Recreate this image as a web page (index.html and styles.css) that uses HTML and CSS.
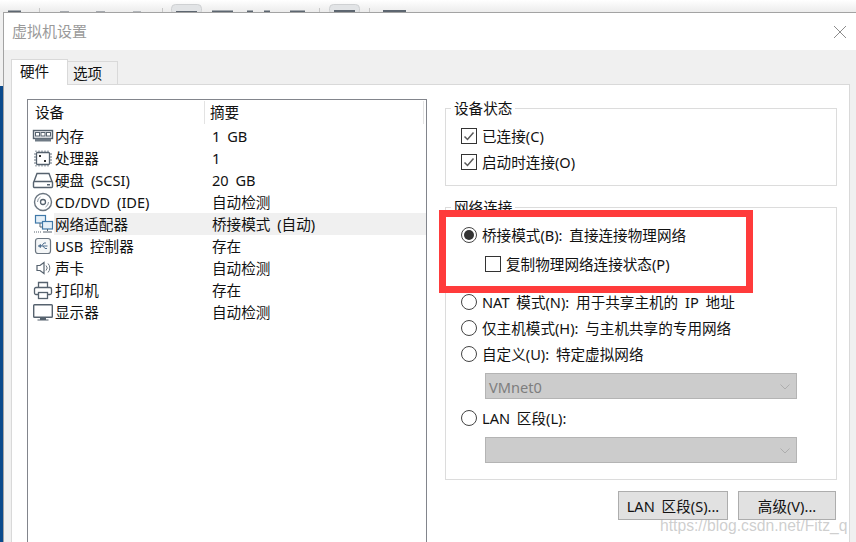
FILE: index.html
```html
<!DOCTYPE html>
<html lang="zh-CN">

<head>
  <meta charset="UTF-8">
  <title>虚拟机设置</title>
  <link rel="stylesheet" href="styles.css">
</head>

<body>
  <div class="page">
    <svg class="toolbar" width="856" height="12" viewBox="0 0 856 12">
      <g fill="#5d6670">
        <rect x="8" y="10.500" width="13" height="1.500" />
        <rect x="60" y="11" width="9" height="1" opacity=".5" />
        <rect x="96" y="11" width="9" height="1" opacity=".5" />
        <rect x="133" y="11" width="8" height="1" opacity=".4" />
      </g>
      <g fill="#c8c8c8">
        <rect x="39" y="8" width="1" height="4" />
        <rect x="162" y="8" width="1" height="4" />
        <rect x="319" y="8" width="1" height="4" />
        <rect x="369" y="8" width="1" height="4" />
      </g>
      <rect x="171.500" y="4.500" width="30" height="10" rx="4" fill="#e2e4e6" stroke="#cfd1d3" />
      <rect x="329.500" y="4.500" width="30" height="10" rx="4" fill="#e2e4e6" stroke="#cfd1d3" />
      <g fill="#5d6670">
        <rect x="176" y="11" width="21" height="1" />
        <rect x="212" y="10.500" width="21" height="1.500" />
        <rect x="247" y="10.500" width="6" height="1.500" />
        <rect x="264" y="10.500" width="6" height="1.500" />
        <rect x="290" y="10.500" width="15" height="1.500" />
        <rect x="334" y="10" width="21" height="2" />
        <rect x="383" y="10" width="23" height="2" />
      </g>
    </svg>

    <div class="window">
      <div class="titlebar">
        <span class="title">虚拟机设置</span>
        <svg class="close" width="12" height="12" viewBox="0 0 12 12">
          <path d="M0 0 12 12M12 0 0 12" stroke="#8c8c8c" fill="none" />
        </svg>
      </div>

      <div class="content">
        <div class="tabs">
          <div class="tab active">硬件</div>
          <div class="tab">选项</div>
        </div>

        <div class="pane">
          <div class="list">
            <div class="list-head">
              <div class="head-cell head-name">设备</div>
              <div class="head-cell head-summary">摘要</div>
            </div>

            <div class="row">
              <svg class="icon" width="22" height="22" viewBox="0 0 22 22">
                <rect x="1.500" y="5.500" width="19" height="8" fill="#eef1f3" stroke="#56626e" stroke-width="1.400" />
                <path d="M3 13.500h16v3h-16z" fill="#6f7a85" />
                <rect x="3.500" y="7.500" width="4" height="3.500" fill="#fff" stroke="#56626e" />
                <rect x="9" y="7.500" width="4" height="3.500" fill="#fff" stroke="#56626e" />
                <rect x="14.500" y="7.500" width="4" height="3.500" fill="#fff" stroke="#56626e" />
              </svg>
              <div class="cell name">内存</div>
              <div class="cell summary">1 GB</div>
            </div>

            <div class="row">
              <svg class="icon" width="22" height="22" viewBox="0 0 22 22">
                <rect x="4.500" y="5.500" width="13" height="12" rx="1" fill="#fff" stroke="#56626e" stroke-width="1.300" />
                <path d="M4 3.500v1.500M7 3.500v1.500M10 3.500v1.500M13 3.500v1.500M16 3.500v1.500M4 18v1.500M7 18v1.500M10 18v1.500M13 18v1.500M16 18v1.500M2 7h2M2 10h2M2 13h2M2 16h2M18 7h2M18 10h2M18 13h2M18 16h2" stroke="#6b7681" fill="none" />
                <rect x="7" y="8" width="2" height="2" fill="#333" />
                <rect x="12" y="13" width="2" height="2" fill="#333" />
              </svg>
              <div class="cell name">处理器</div>
              <div class="cell summary">1</div>
            </div>

            <div class="row">
              <svg class="icon" width="22" height="22" viewBox="0 0 22 22">
                <path d="M2 12.500 5 4.500h12l3 8" fill="none" stroke="#56626e" stroke-width="1.400" />
                <rect x="1.500" y="12.500" width="19" height="6" rx="1" fill="#fff" stroke="#56626e" stroke-width="1.400" />
                <rect x="15" y="15" width="3" height="1.500" fill="#56626e" />
              </svg>
              <div class="cell name">硬盘 (SCSI)</div>
              <div class="cell summary">20 GB</div>
            </div>

            <div class="row">
              <svg class="icon" width="22" height="22" viewBox="0 0 22 22">
                <circle cx="11" cy="11" r="8.500" fill="#fff" stroke="#6b7681" stroke-width="1.400" />
                <circle cx="11" cy="11" r="2.500" fill="none" stroke="#56626e" stroke-width="1.300" />
                <path d="M5.500 11a5.500 5.500 0 0 1 3-5M16.500 11a5.500 5.500 0 0 1-3 5" fill="none" stroke="#8d97a1" />
              </svg>
              <div class="cell name">CD/DVD (IDE)</div>
              <div class="cell summary">自动检测</div>
            </div>

            <div class="row selected">
              <svg class="icon" width="22" height="22" viewBox="0 0 22 22">
                <rect x="3.500" y="2.500" width="10" height="7.500" fill="#e6f0f8" stroke="#3f78a8" stroke-width="1.200" />
                <rect x="10.500" y="8.500" width="10" height="7.500" fill="#e6f0f8" stroke="#3f78a8" stroke-width="1.200" />
                <path d="M8 10v4h2.500M15.500 16v2" fill="none" stroke="#56626e" />
                <path d="M2 19h1M4 19h1M6 19h1M8 19h1M11 19h9" stroke="#56626e" fill="none" />
              </svg>
              <div class="cell name">网络适配器</div>
              <div class="cell summary">桥接模式 (自动)</div>
            </div>

            <div class="row">
              <svg class="icon" width="22" height="22" viewBox="0 0 22 22">
                <rect x="3.500" y="3.500" width="15" height="15" rx="2.500" fill="#f4f6f7" stroke="#6b7681" stroke-width="1.200" />
                <path d="M6.500 11h9M6.500 11l2-1.500v3zM9.500 11l2.500-3h2M11 11l2 2.500h2" fill="none" stroke="#4f6f8f" />
              </svg>
              <div class="cell name">USB 控制器</div>
              <div class="cell summary">存在</div>
            </div>

            <div class="row">
              <svg class="icon" width="22" height="22" viewBox="0 0 22 22">
                <path d="M5 8.500h3l4-3v11l-4-3h-3z" fill="#fff" stroke="#56626e" stroke-width="1.200" />
                <path d="M14 8.500a3.500 3.500 0 0 1 0 5M16 6.500a6.500 6.500 0 0 1 0 9" fill="none" stroke="#6b7681" />
              </svg>
              <div class="cell name">声卡</div>
              <div class="cell summary">自动检测</div>
            </div>

            <div class="row">
              <svg class="icon" width="22" height="22" viewBox="0 0 22 22">
                <path d="M6.500 8.500v-5h9v5" fill="none" stroke="#56626e" stroke-width="1.300" />
                <rect x="2.500" y="8.500" width="17" height="7" rx="1.500" fill="#fff" stroke="#56626e" stroke-width="1.300" />
                <rect x="6.500" y="13.500" width="9" height="6" fill="#fff" stroke="#56626e" stroke-width="1.300" />
              </svg>
              <div class="cell name">打印机</div>
              <div class="cell summary">存在</div>
            </div>

            <div class="row">
              <svg class="icon" width="22" height="22" viewBox="0 0 22 22">
                <rect x="1.700" y="3.700" width="18.600" height="12.600" rx=".8" fill="#fff" stroke="#56626e" stroke-width="1.400" />
                <path d="M8 17h6v1.500h-6zM5.500 18.500h11v1h-11z" fill="#56626e" />
              </svg>
              <div class="cell name">显示器</div>
              <div class="cell summary">自动检测</div>
            </div>
          </div>

          <div class="side">
            <fieldset class="group">
              <legend>设备状态</legend>
              <label class="option">
                <span class="checkbox">
                  <svg width="14" height="14" viewBox="0 0 14 14">
                    <path d="M2.500 7.500 5.500 10.500 11.500 3.500" fill="none" stroke="#5a5a5a" stroke-width="1.500" />
                  </svg>
                </span>
                <span class="label">已连接(C)</span>
              </label>
              <label class="option">
                <span class="checkbox">
                  <svg width="14" height="14" viewBox="0 0 14 14">
                    <path d="M2.500 7.500 5.500 10.500 11.500 3.500" fill="none" stroke="#5a5a5a" stroke-width="1.500" />
                  </svg>
                </span>
                <span class="label">启动时连接(O)</span>
              </label>
            </fieldset>

            <fieldset class="group network">
              <legend>网络连接</legend>
              <label class="option"><span class="radio checked"></span><span class="label">桥接模式(B): 直接连接物理网络</span></label>
              <label class="option nested"><span class="checkbox"></span><span class="label">复制物理网络连接状态(P)</span></label>
              <label class="option after-box"><span class="radio"></span><span class="label">NAT 模式(N): 用于共享主机的 IP 地址</span></label>
              <label class="option"><span class="radio"></span><span class="label">仅主机模式(H): 与主机共享的专用网络</span></label>
              <label class="option"><span class="radio"></span><span class="label">自定义(U): 特定虚拟网络</span></label>
              <div class="select">
                <span>VMnet0</span>
                <svg width="10" height="6" viewBox="0 0 10 6">
                  <path d="M.5 .5 5 5 9.500 .5" fill="none" stroke="#adadad" />
                </svg>
              </div>
              <label class="option after-select"><span class="radio"></span><span class="label">LAN 区段(L):</span></label>
              <div class="select">
                <span></span>
                <svg width="10" height="6" viewBox="0 0 10 6">
                  <path d="M.5 .5 5 5 9.500 .5" fill="none" stroke="#adadad" />
                </svg>
              </div>
            </fieldset>

            <div class="actions">
              <button class="btn btn-lan">LAN 区段(S)...</button>
              <button class="btn btn-adv">高级(V)...</button>
            </div>
          </div>
        </div>
      </div>
    </div>

    <!-- annotation and watermark sit on top of the dialog -->
    <div class="highlight"></div>
    <div class="watermark">https://blog.csdn.net/Fitz_q</div>
  </div>
</body>

</html>
```

FILE: styles.css
```css
* {
  box-sizing: border-box;
}

html,
body {
  margin: 0;
  padding: 0;
}

body {
  width: 856px;
  height: 542px;
  overflow: hidden;
  font-family: "Noto Sans", "Noto Sans CJK SC", sans-serif;
  font-size: 14.6px;
  word-spacing: 3px;
  color: #111;
}

.page {
  position: relative;
  width: 856px;
  height: 542px;
  overflow: hidden;
  background: linear-gradient(#f0f0f0 0, #f0f0f0 86px, #0b4a8c 86px, #0b4a8c 100%);
}

.toolbar {
  display: block;
  background: linear-gradient(#ffffff, #ececec);
}

.window {
  margin-left: 3px;
  height: 530px;
  border-top: 1px solid #a3a3a3;
  border-left: 1px solid #a3a3a3;
  background: #f0f0f0;
  display: flex;
  flex-direction: column;
}

.titlebar {
  height: 37px;
  flex: none;
  background: #fff;
  display: flex;
  align-items: center;
  justify-content: space-between;
  padding: 0 10px 2px 8px;
}

.title {
  color: #9a9a9a;
  font-size: 15px;
}

.close {
  margin-top: 2px;
}

.content {
  flex: 1;
  padding: 9px 6px 0 7px;
  display: flex;
  flex-direction: column;
}

.tabs {
  display: flex;
  align-items: flex-end;
  height: 25px;
  flex: none;
}

.tab {
  height: 23px;
  width: 50px;
  padding-left: 5px;
  line-height: 22px;
  background: #f0f0f0;
  border: 1px solid #d9d9d9;
  border-bottom: none;
  border-left: none;
}

.tab.active {
  height: 26px;
  width: 57px;
  margin-bottom: -1px;
  padding-left: 8px;
  position: relative;
  line-height: 22px;
  background: #fff;
  border-left: 1px solid #d9d9d9;
}

.pane {
  flex: 1;
  background: #fff;
  border: 1px solid #d9d9d9;
  border-bottom: none;
  padding: 14px 12px 0 15px;
  display: flex;
  gap: 18px;
  min-height: 0;
}

.list {
  width: 400px;
  flex: none;
  border: 1px solid #82858c;
  border-bottom: none;
}

.list-head {
  display: flex;
  height: 25px;
  padding-top: 1px;
  line-height: 22px;
}

.head-cell {
  height: 23px;
}

.head-name {
  width: 177px;
  padding-left: 7px;
  border-right: 1px solid #e3e3e3;
}

.head-summary {
  flex: 1;
  margin-right: 2px;
  padding-left: 5px;
  border-right: 1px solid #e3e3e3;
}

.row {
  display: flex;
  height: 22px;
  line-height: 22px;
}

.icon {
  flex: none;
  margin-left: 4px;
}

.cell {
  white-space: nowrap;
}

.name {
  width: 158px;
  padding-left: 1px;
}

.summary {
  flex: 1;
}

.selected .name,
.selected .summary {
  background: #f0f0f0;
}

.side {
  width: 392px;
  flex: none;
  margin-top: -1px;
}

.group {
  margin: 0;
  padding: 5px 15px 10px;
  border: 1px solid #dcdcdc;
  min-width: 0;
}

.group legend {
  margin-left: -10px;
  padding: 0 3px;
  line-height: 20px;
  height: 20px;
}

.network {
  margin-top: 11px;
  padding-bottom: 16px;
}

.option {
  display: flex;
  align-items: center;
  height: 26px;
  gap: 5px;
  white-space: nowrap;
}

.label {
  margin-top: -2px;
}

.nested {
  margin: 3px 0 0 24px;
}

.after-box {
  margin-top: 12px;
}

.after-select {
  margin-top: 6px;
}

.checkbox {
  width: 16px;
  height: 16px;
  flex: none;
  border: 1px solid #333;
  background: #fff;
  display: flex;
  align-items: center;
  justify-content: center;
}

.radio {
  width: 16px;
  height: 16px;
  flex: none;
  border: 1px solid #444;
  border-radius: 50%;
  background: #fff;
  display: flex;
  align-items: center;
  justify-content: center;
}

.radio.checked::after {
  content: "";
  width: 10px;
  height: 10px;
  border-radius: 50%;
  background: #333;
}

.select {
  width: 312px;
  height: 26px;
  margin: 6px 0 0 24px;
  padding: 1px 6px 0 3px;
  background: #cccccc;
  border: 1px solid #b4b4b4;
  color: #7e7e7e;
  display: flex;
  align-items: center;
  justify-content: space-between;
}

.actions {
  display: flex;
  justify-content: flex-end;
  gap: 10px;
  margin-top: 11px;
  padding-right: 1px;
}

.btn {
  height: 29px;
  padding: 0;
  background: #e1e1e1;
  border: 1px solid #adadad;
  font: inherit;
  word-spacing: inherit;
  color: #111;
}

.btn-lan {
  width: 110px;
}

.btn-adv {
  width: 98px;
}

.highlight {
  position: absolute;
  left: 439px;
  top: 210px;
  width: 314px;
  height: 83px;
  border: 7px solid #ff3b3b;
}

.watermark {
  position: absolute;
  left: 660px;
  top: 516px;
  font-family: "Liberation Sans", Arial, sans-serif;
  font-size: 15.7px;
  word-spacing: 0;
  line-height: 20px;
  color: rgba(165, 165, 165, 0.55);
  white-space: nowrap;
}
```
